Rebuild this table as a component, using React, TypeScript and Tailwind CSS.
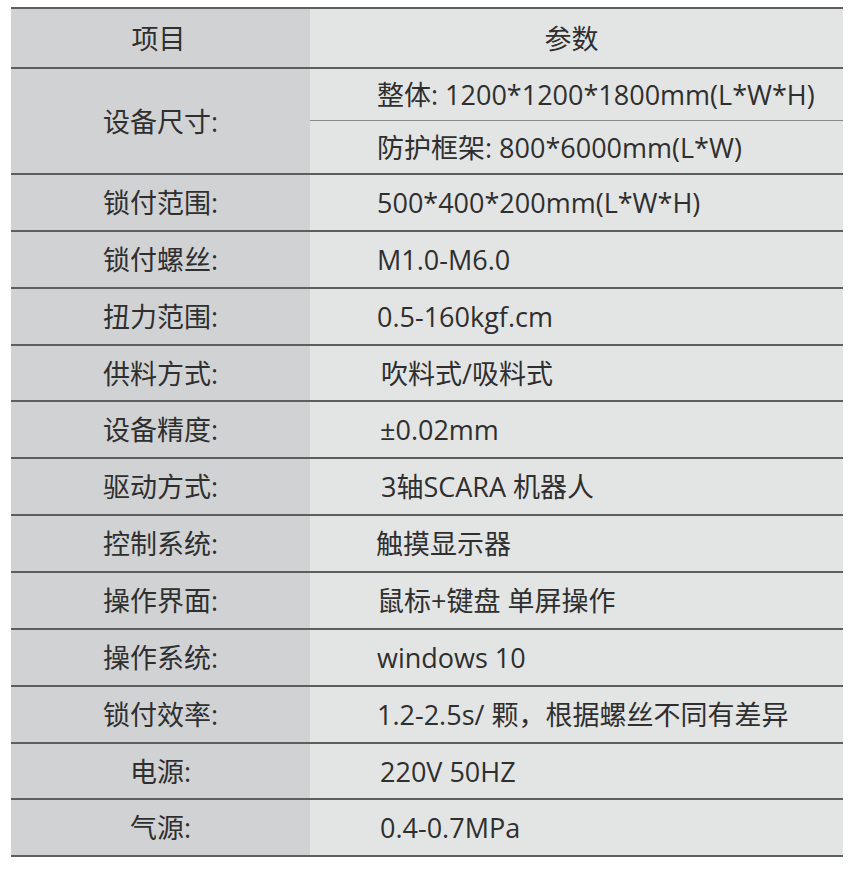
const rows: { label: string; value: string; h: string; pad?: string }[] = [
  { label: "锁付范围:", value: "500*400*200mm(L*W*H)", h: "h-[57px]" },
  { label: "锁付螺丝:", value: "M1.0-M6.0", h: "h-[57px]" },
  { label: "扭力范围:", value: "0.5-160kgf.cm", h: "h-[57px]" },
  { label: "供料方式:", value: "吹料式/吸料式", h: "h-[56px]", pad: "pl-[71px]" },
  { label: "设备精度:", value: "±0.02mm", h: "h-[57px]", pad: "pl-[70px]" },
  { label: "驱动方式:", value: "3轴SCARA 机器人", h: "h-[57px]", pad: "pl-[71px]" },
  { label: "控制系统:", value: "触摸显示器", h: "h-[57px]", pad: "pl-[66px]" },
  { label: "操作界面:", value: "鼠标+键盘 单屏操作", h: "h-[57px]" },
  { label: "操作系统:", value: "windows 10", h: "h-[57px]" },
  { label: "锁付效率:", value: "1.2-2.5s/ 颗，根据螺丝不同有差异", h: "h-[57px]" },
  { label: "电源:", value: "220V 50HZ", h: "h-[56px]", pad: "pl-[70px]" },
  { label: "气源:", value: "0.4-0.7MPa", h: "h-[57px]", pad: "pl-[70px]" },
];

export default function App() {
  return (
    <div
      className="w-[857px] h-[888px] bg-white pt-[7px] pl-[11px] text-[#2f2f2f] text-[27px] leading-none"
      style={{ fontFamily: '"Open Sans", "Noto Sans CJK SC", sans-serif' }}
    >
      <div className="w-[832px] border-b-2 border-[#5e5e5e]">
        {/* header */}
        <div className="flex h-[60px] border-t-2 border-[#5e5e5e]">
          <div className="w-[299px] bg-[#d1d2d4] flex items-center justify-center pr-[4px]">项目</div>
          <div className="flex-1 bg-[#e3e4e4] flex items-center justify-center pr-[10px]">参数</div>
        </div>

        {/* size row with two sub-rows */}
        <div className="flex h-[106px] border-t-2 border-[#5e5e5e]">
          <div className="w-[299px] bg-[#d1d2d4] flex items-center justify-center">设备尺寸:</div>
          <div className="flex-1 bg-[#e3e4e4] flex flex-col">
            <div className="h-[52px] flex items-center pl-[67px] border-b border-[#8a8a8a]">
              整体: 1200*1200*1800mm(L*W*H)
            </div>
            <div className="flex-1 flex items-center pl-[67px]">防护框架: 800*6000mm(L*W)</div>
          </div>
        </div>

        {rows.map((r) => (
          <div key={r.label} className={`flex ${r.h} border-t-2 border-[#5e5e5e]`}>
            <div className="w-[299px] bg-[#d1d2d4] flex items-center justify-center">{r.label}</div>
            <div className={`flex-1 bg-[#e3e4e4] flex items-center ${r.pad ?? "pl-[67px]"}`}>{r.value}</div>
          </div>
        ))}
      </div>
    </div>
  );
}
